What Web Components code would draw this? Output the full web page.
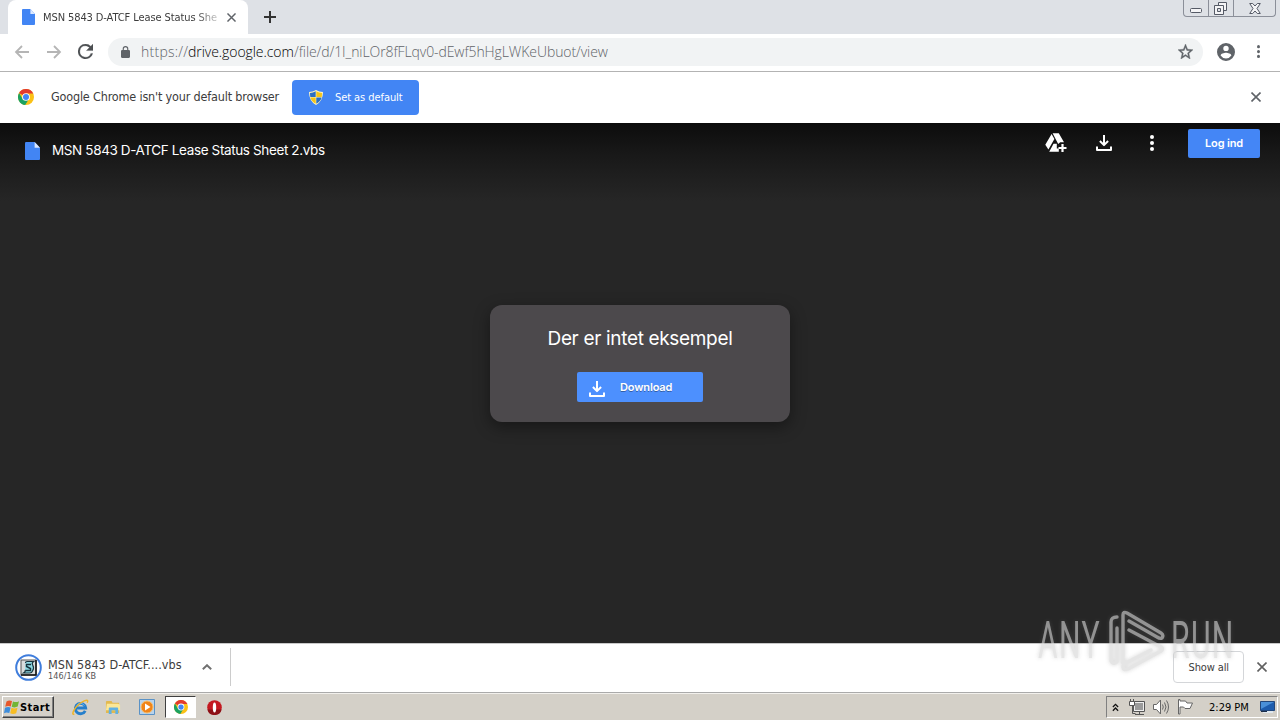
<!DOCTYPE html>
<html lang="en">
<head>
<meta charset="utf-8">
<title>MSN 5843 D-ATCF Lease Status Sheet 2.vbs</title>
<style>
  html, body {
    margin: 0;
    width: 1280px;
    height: 720px;
    overflow: hidden;
  }
  body {
    font-family: "DejaVu Sans Condensed", "DejaVu Sans", sans-serif;
    font-stretch: condensed;
    color: #3c3c3c;
  }
</style>
</head>
<body>
<desk-top></desk-top>

<script>
'use strict'

const ICONS = {
  file: ['0 0 14 16', '<path fill="#4285f4" d="M1 0h8l5 5v10q0 1-1 1H1q-1 0-1-1V1q0-1 1-1z"/><path fill="#dce9ff" d="M9 0l5 5H9z"/>'],
  close: ['0 0 10 10', '<path stroke="currentColor" stroke-width="1.6" d="M.5.5l9 9M9.500.500l-9 9"/>'],
  plus: ['0 0 12 12', '<path stroke="#333" stroke-width="2" d="M6 0v12M0 6h12"/>'],
  back: ['0 0 16 16', '<path fill="none" stroke="#b5b5b5" stroke-width="1.8" d="M15 8H2M8 2L2 8l6 6"/>'],
  forward: ['0 0 16 16', '<path fill="none" stroke="#b5b5b5" stroke-width="1.8" d="M1 8h13M8 2l6 6-6 6"/>'],
  reload: ['4 4 16 16', '<path fill="#4c4f52" stroke="#4c4f52" stroke-width=".3" d="M17.65 6.35A7.96 7.96 0 0 0 12 4a8 8 0 1 0 7.73 10h-2.08A6 6 0 1 1 12 6c1.66 0 3.14.69 4.22 1.78L13 11h7V4z"/>'],
  lock: ['4 1 16 21', '<path fill="#5f6368" d="M18 8h-1V6A5 5 0 0 0 7 6v2H6a2 2 0 0 0-2 2v10c0 1.1.9 2 2 2h12a2 2 0 0 0 2-2V10a2 2 0 0 0-2-2zM9 6a3 3 0 0 1 6 0v2H9z"/>'],
  star: ['2 2 20 19', '<path fill="#5f6368" stroke="#5f6368" stroke-width=".5" d="M22 9.24l-7.19-.62L12 2 9.19 8.63 2 9.24l5.46 4.73L5.82 21 12 17.27 18.18 21l-1.63-7.03zM12 15.4l-3.76 2.27 1-4.28-3.32-2.88 4.38-.38L12 6.1l1.71 4.04 4.38.38-3.32 2.88 1 4.28z"/>'],
  person: ['2 2 20 20', '<path fill="#5f6368" d="M12 2a10 10 0 1 0 0 20 10 10 0 0 0 0-20zm0 3a3 3 0 1 1 0 6 3 3 0 0 1 0-6zm0 14.2a7.2 7.2 0 0 1-6-3.22c.03-1.99 4-3.08 6-3.08s5.97 1.09 6 3.08a7.2 7.2 0 0 1-6 3.22z"/>'],
  dots: ['0 0 4 16', '<g fill="currentColor"><circle cx="2" cy="2" r="2"/><circle cx="2" cy="8" r="2"/><circle cx="2" cy="14" r="2"/></g>'],
  chrome: ['0 0 24 24', '<circle cx="12" cy="12" r="12" fill="#fbc116"/><path fill="#e33b2e" d="M12 12L1.6 6a12 12 0 0 1 20.8 0L23 6.8H12z"/><path fill="#1ba261" d="M1.6 6a12 12 0 0 0 9.2 18l5.5-9L12 12 6.8 14.8z"/><circle cx="12" cy="12" r="5.8" fill="#fff"/><circle cx="12" cy="12" r="4.5" fill="#4285f4"/>'],
  shield: ['0 0 14 15', '<path fill="#fff5c2" d="M7 0q3 2 7 2 0 9-7 13Q0 11 0 2q4 0 7-2z"/><path fill="#2b6fc2" d="M6.7 1.2v5.8H1.3Q1 5 1 3q3 0 5.700-1.800zM7.300 7.500h5.300q-1 4-5.300 6.300z"/><path fill="#f5c518" d="M7.300 1.200Q10 3 13 3q0 2-.3 4H7.300zM1.400 7.500h5.300v6.300Q2.400 11.500 1.400 7.500z"/>'],
  driveAdd: ['0 0 22 20', '<path fill="#fff" d="M6.600 1L9.400 6 3.400 16.500.3 11.800zM7.600.3h6.200l5.200 9h-3.800l-2 1.600zM7.200 13.200l1.300-2.400h3.300v4.800h2v3.100H4.200z"/><path stroke="#fff" stroke-width="2.200" d="M17.500 11v8M13.500 15h8"/>'],
  download: ['0 0 16 16', '<path fill="none" stroke="#fff" stroke-width="2" stroke-linejoin="round" d="M8 0v9.500M3.900 6L8 10.100 12.100 6M1 11.500V15h14v-3.500"/>'],
  chevron: ['0 0 10 6', '<path fill="none" stroke="#707070" stroke-width="1.900" d="M.8 5.300L5 1.200l4.200 4.100"/>'],
  script: ['0 0 27 27', '<circle cx="13.500" cy="13.500" r="12.300" fill="#fff" stroke="#3f7ddc" stroke-width="2"/><path fill="#d8dcdc" stroke="#555" d="M6 6h15v15H6z"/><path fill="none" stroke="#111" stroke-width="1.500" d="M21 6v15H6"/><path fill="#8fdbe4" stroke="#16323c" stroke-width="1.200" d="M10.500 9q0-1.500 1.500-1.500h6.500q-2 1.500-.8 3.500 1.800 3-.2 6-.8 2-2.500 2H8.500q2.500-1.500 1.500-3"/><path fill="none" stroke="#16323c" stroke-width="1.400" d="M16 10.500h-4.500v2l4 2v2h-5"/>'],
  windows: ['0 0 16 16', '<path fill="#e7582b" d="M2.500 2.500Q5 .8 8 2L6.800 7.400Q4 6.300 1.200 7.800z"/><path fill="#73b535" d="M9 2.400q3 1.400 6-.2l-1.300 5.400q-3 1.500-6 .2z"/><path fill="#3e8ddb" d="M1 8.700q3-1.400 5.600-.3L5.300 14q-3-1.200-5.300.2z"/><path fill="#f7bd23" d="M7.500 8.800q3 1.400 6-.1l-1.300 5.500q-3 1.500-6 .1z"/>'],
  explorer: ['0 0 18 18', '<path fill="none" stroke="#267fcb" stroke-width="3" d="M14 12.500A5.500 5.500 0 1 1 14.500 9.500H5"/><path fill="none" stroke="#70b8ee" stroke-width="1" d="M5 7a4.500 4.500 0 0 1 8 0"/><path fill="none" stroke="#eeb52b" stroke-width="1.600" d="M2.500 16Q-.5 17 2 12 6 5 13 2q5-2 3 2"/>'],
  folder: ['0 0 17 17', '<path fill="#e2b94f" d="M1 3q0-1 1-1h5l1 2h7v11H1z"/><path fill="#fbe797" d="M2 5h12l2 1v6H1z"/><path fill="#61b1e3" d="M4 10q0-1 1-1h8q1 0 1 1v6h-3v-4H7v4H4z"/>'],
  player: ['0 0 16 16', '<path fill="#b8d3ec" stroke="#5a92c6" d="M.5.5h15v15H.5z"/><circle cx="8" cy="8" r="6" fill="#f08418" stroke="#f9bd67"/><path fill="#fff" d="M6 4.500L11.500 8 6 11.500z"/>'],
  opera: ['0 0 16 16', '<circle cx="8" cy="8" r="7.800" fill="#c41920"/><path fill="#8d1016" d="M.4 10a7.800 7.800 0 0 0 15.200 0z"/><ellipse cx="8" cy="8" rx="1.800" ry="5.300" fill="#fff"/>'],
  tray: ['0 0 8 10', '<path fill="none" stroke="#111" stroke-width="1.500" d="M1 4.500l3-3 3 3M1 8.500l3-3 3 3"/>'],
  network: ['0 0 16 16', '<path fill="#eee" stroke="#555" d="M4.500 2.500h11v10h-11z"/><path fill="#9b9b9b" d="M6 4h8v7H6z"/><path stroke="#555" d="M10.500 13v2M6 15.500h9"/><path fill="none" stroke="#555" d="M3.500 6v8.500h3"/><path fill="#fff" stroke="#555" d="M.5 2.500h5v4h-5z"/><path stroke="#555" d="M1.500 0v3M4.500 0v3"/>'],
  sound: ['0 0 16 16', '<path fill="#fff" stroke="#666" d="M.5 5.500h3l4-4.500v14l-4-4.500h-3z"/><path fill="none" stroke="#666" d="M9.500 5.500q1.500 2.500 0 5M11.500 3.500q3 4.500 0 9M13.500 1.500q4 6.500 0 13"/>'],
  flag: ['0 0 16 16', '<path fill="#fff" stroke="#666" d="M1.500 15V.5H3V2h5.500l1.500 2h5.500L13 9.500H8L6.500 8H3v7z"/>'],
  screen: ['0 0 15 13', '<path fill="#1d5cad" stroke="#23477a" d="M.5.500h14v9H.5z"/><path fill="#4a90d8" d="M1 1h13L1 8z"/><path fill="#dfe7ee" d="M3 10h10v2H3z"/><path fill="#1b2d48" d="M1 10h6v1H1z"/>'],
  minimize: ['0 0 13 5', '<rect x=".5" y=".5" width="11" height="4" rx="1" fill="#f4f4f6" stroke="#555a66"/>'],
  restore: ['0 0 13 13', '<path fill="#f4f4f6" stroke="#555a66" d="M4.500.5h8v8h-8z"/><path fill="#f4f4f6" stroke="#555a66" d="M.5 3.500h9v9h-9z"/><path fill="#dee1e6" stroke="#555a66" d="M3.500 6.500h3v3h-3z"/>'],
  winClose: ['0 0 12 11', '<path fill="#f4f4f6" stroke="#555a66" d="M.7.500h3L6 3 8.300.500h3L8 5.500l3.300 5h-3L6 8l-2.300 2.500h-3L4 5.500z"/>'],
  play: ['0 0 56 62', '<g fill="none" stroke="currentColor" stroke-width="3.400" stroke-linejoin="round" stroke-linecap="round"><path d="M8 7Q2 7 2 12v38q0 4 4 3M14 53V5q0-4 4-2l34 20q3 2 1 5-2 1-5-1L20 11M8 18v34M20 20l32 17q3 2 0 4L19 59q-5 2-5-2 0-2 3-4l25-13"/></g>']
}

class UiIcon extends HTMLElement {
  connectedCallback() {
    const [box, shapes] = ICONS[this.getAttribute('name')]
    const w = this.getAttribute('w')
    const h = this.getAttribute('h') || w
    this.attachShadow({ mode: 'open' }).innerHTML = `
    <style>
    :host { display: block; flex: none; width: ${w}px; height: ${h}px; }
    svg { display: block; width: 100%; height: 100%; }
    </style>
    <svg viewBox="${box}" preserveAspectRatio="none">${shapes}</svg>
    `
  }
}

// one line of text, tracked so that it fills the given width
class TextLabel extends HTMLElement {
  connectedCallback() {
    this.attachShadow({ mode: 'open' }).innerHTML = `
    <style>
    :host { display: inline-block; flex: none; white-space: nowrap; }
    span { display: inline-block; }
    </style>
    <span><slot></slot></span>
    `
    const width = Number(this.getAttribute('w'))
    if (!width) return
    const span = this.shadowRoot.querySelector('span')
    const count = this.textContent.length
    span.style.letterSpacing = `${(width - span.offsetWidth) / count}px`
    this.style.width = `${width}px`
  }
}

class TabStrip extends HTMLElement {
  connectedCallback() {
    this.attachShadow({ mode: 'open' }).innerHTML = `
    <style>
    :host { display: flex; height: 34px; background: #dee1e6; }
    .tab {
      display: flex;
      align-items: center;
      box-sizing: border-box;
      width: 240px;
      margin-left: 8px;
      padding: 0 11px 0 14px;
      background: #fff;
      border-radius: 8px 8px 0 0;
    }
    .title {
      width: 176px;
      margin: 0 8px;
      font-size: 11px;
      -webkit-mask-image: linear-gradient(to right, #000 152px, rgba(0, 0, 0, .2) 176px);
    }
    .tab ui-icon[name=close] { color: #5f6368; }
    .add { margin: 11px 0 0 16px; }
    .buttons {
      display: flex;
      box-sizing: border-box;
      height: 17px;
      margin: 0 4px 0 auto;
      border: 1px solid #8b8f99;
      border-top: 0;
      border-radius: 0 0 4px 4px;
    }
    .buttons div { display: flex; align-items: center; justify-content: center; width: 24px; border-right: 1px solid #8b8f99; }
    .buttons div:first-child { align-items: flex-end; padding-bottom: 3px; box-sizing: border-box; width: 25px; }
    .buttons div:last-child { width: 41px; border: 0; }
    .buttons ui-icon[name=restore] { margin: 0 2px 0 0; }
    </style>
    <div class="tab">
      <ui-icon name="file" w="13" h="16"></ui-icon>
      <div class="title"><text-label w="174">MSN 5843 D-ATCF Lease Status She</text-label></div>
      <ui-icon name="close" w="9"></ui-icon>
    </div>
    <ui-icon class="add" name="plus" w="12"></ui-icon>
    <div class="buttons">
      <div><ui-icon name="minimize" w="13" h="5"></ui-icon></div>
      <div><ui-icon name="restore" w="13"></ui-icon></div>
      <div><ui-icon name="winClose" w="12" h="11"></ui-icon></div>
    </div>
    `
  }
}

class AddressBar extends HTMLElement {
  connectedCallback() {
    this.attachShadow({ mode: 'open' }).innerHTML = `
    <style>
    :host {
      display: flex;
      align-items: center;
      box-sizing: border-box;
      height: 38px;
      padding: 0 20px 2px 14px;
      background: #fff;
      border-bottom: 1px solid #b3b3b3;
    }
    ui-icon[name=forward], ui-icon[name=reload] { margin-left: 16px; }
    .url {
      display: flex;
      align-items: center;
      box-sizing: border-box;
      width: 1095px;
      height: 28px;
      margin: 0 14px 0 15px;
      padding: 0 10px 0 13px;
      border-radius: 14px;
      background: #f1f3f4;
      font: 300 14px "Open Sans", sans-serif;
      color: #5f6368;
    }
    ui-icon[name=lock] { margin-right: 11px; }
    .host { color: #000; }
    ui-icon[name=star] { margin-left: auto; }
    ui-icon[name=dots] { margin-left: auto; color: #5f6368; }
    </style>
    <ui-icon name="back" w="16"></ui-icon>
    <ui-icon name="forward" w="16"></ui-icon>
    <ui-icon name="reload" w="15"></ui-icon>
    <div class="url">
      <ui-icon name="lock" w="9" h="12"></ui-icon>
      <text-label w="47">https://</text-label><text-label class="host" w="106">drive.google.com</text-label><text-label w="314">/file/d/1I_niLOr8fFLqv0-dEwf5hHgLWKeUbuot/view</text-label>
      <ui-icon name="star" w="15"></ui-icon>
    </div>
    <ui-icon name="person" w="18"></ui-icon>
    <ui-icon name="dots" w="3" h="13"></ui-icon>
    `
  }
}

class InfoBar extends HTMLElement {
  connectedCallback() {
    this.attachShadow({ mode: 'open' }).innerHTML = `
    <style>
    :host {
      display: flex;
      align-items: center;
      box-sizing: border-box;
      height: 51px;
      padding: 0 19px 1px 18px;
      background: #fff;
      font-size: 12.500px;
    }
    .message { margin: 0 13px 2px 17px; }
    .set {
      display: flex;
      align-items: center;
      box-sizing: border-box;
      width: 127px;
      height: 35px;
      padding-left: 17px;
      border-radius: 4px;
      background: #4285f4;
      color: #fff;
      font-size: 11px;
    }
    .set text-label { margin-left: 12px; }
    ui-icon[name=close] { margin-left: auto; color: #5f6368; }
    </style>
    <ui-icon name="chrome" w="16"></ui-icon>
    <text-label class="message" w="228">Google Chrome isn't your default browser</text-label>
    <div class="set">
      <ui-icon name="shield" w="14" h="15"></ui-icon>
      <text-label w="68">Set as default</text-label>
    </div>
    <ui-icon name="close" w="10"></ui-icon>
    `
  }
}

class DriveViewer extends HTMLElement {
  connectedCallback() {
    this.attachShadow({ mode: 'open' }).innerHTML = `
    <style>
    :host {
      display: flex;
      flex-direction: column;
      height: 520px;
      background: linear-gradient(#0c0c0c 0, #181818 30px, #262626 78px);
      font-family: Inter, "Open Sans", sans-serif;
      color: #fff;
    }
    header { display: flex; align-items: flex-start; height: 182px; padding: 0 20px 0 25px; box-sizing: border-box; }
    .name { margin: 18px 0 0 12px; font-size: 13.500px; line-height: 18px; }
    header ui-icon[name=file] { margin-top: 19px; }
    header ui-icon[name=driveAdd] { margin: 10px 0 0 auto; }
    header ui-icon[name=download] { margin: 12px 0 0 29px; }
    header ui-icon[name=dots] { margin: 12px 0 0 38px; }
    .login {
      width: 72px;
      height: 29px;
      margin: 6px 0 0 34px;
      border-radius: 2px;
      background: #4486f6;
      font-size: 11px;
      font-weight: 600;
      line-height: 29px;
      text-align: center;
    }
    .card {
      display: flex;
      flex-direction: column;
      align-items: center;
      box-sizing: border-box;
      width: 300px;
      height: 117px;
      align-self: center;
      padding-top: 21px;
      border-radius: 12px;
      background: #4c494c;
      box-shadow: 0 5px 16px rgba(0, 0, 0, .4);
    }
    .card > text-label { font-size: 19px; line-height: 26px; }
    .get {
      display: flex;
      align-items: center;
      box-sizing: border-box;
      width: 126px;
      height: 30px;
      margin-top: 20px;
      padding-left: 12px;
      border-radius: 2px;
      background: #4d90fe;
      font-size: 11px;
      font-weight: 600;
      text-shadow: 0 1px rgba(0, 0, 0, .35);
    }
    .get ui-icon { margin-top: 4px; }
    .get text-label { margin-left: 15px; }
    </style>
    <header>
      <ui-icon name="file" w="15" h="18"></ui-icon>
      <text-label class="name" w="273">MSN 5843 D-ATCF Lease Status Sheet 2.vbs</text-label>
      <ui-icon name="driveAdd" w="22" h="20"></ui-icon>
      <ui-icon name="download" w="16"></ui-icon>
      <ui-icon name="dots" w="4" h="16"></ui-icon>
      <div class="login"><text-label w="38">Log ind</text-label></div>
    </header>
    <div class="card">
      <text-label w="185">Der er intet eksempel</text-label>
      <div class="get">
        <ui-icon name="download" w="16"></ui-icon>
        <text-label w="52">Download</text-label>
      </div>
    </div>
    `
  }
}

class DownloadShelf extends HTMLElement {
  connectedCallback() {
    this.attachShadow({ mode: 'open' }).innerHTML = `
    <style>
    :host {
      display: flex;
      align-items: center;
      box-sizing: border-box;
      height: 49px;
      padding: 0 13px 2px 15px;
      border-top: 1px solid #c8c8c8;
      background: #fff;
    }
    .item {
      display: flex;
      align-items: center;
      box-sizing: border-box;
      width: 216px;
      height: 38px;
      border-right: 1px solid #ccc;
    }
    .names { display: flex; flex-direction: column; margin: 4px 20px 0 6px; }
    .names text-label:first-child { font-size: 12.500px; line-height: 14px; }
    .names text-label:last-child { font-size: 9px; line-height: 9px; color: #555; }
    .all {
      box-sizing: border-box;
      width: 71px;
      height: 32px;
      margin: 0 13px 0 auto;
      border: 1px solid #d4d6d9;
      border-radius: 4px;
      font-size: 11px;
      line-height: 31px;
      text-align: center;
    }
    ui-icon[name=close] { color: #606060; }
    </style>
    <div class="item">
      <ui-icon name="script" w="27"></ui-icon>
      <div class="names">
        <text-label w="134">MSN 5843 D-ATCF....vbs</text-label>
        <text-label w="48">146/146 KB</text-label>
      </div>
      <ui-icon name="chevron" w="10" h="6"></ui-icon>
    </div>
    <div class="all"><text-label w="40">Show all</text-label></div>
    <ui-icon name="close" w="10"></ui-icon>
    `
  }
}

class TaskBar extends HTMLElement {
  connectedCallback() {
    this.attachShadow({ mode: 'open' }).innerHTML = `
    <style>
    :host {
      display: flex;
      align-items: center;
      box-sizing: border-box;
      height: 28px;
      padding: 1px 2px 0;
      border-top: 1px solid #aaa;
      background: #d4d0c8;
      box-shadow: inset 0 1px #f2f0ec;
      color: #000;
      font-size: 11px;
    }
    .start {
      display: flex;
      align-items: center;
      box-sizing: border-box;
      width: 52px;
      height: 22px;
      padding-left: 1px;
      border: 1px solid;
      border-color: #fff #404040 #404040 #fff;
      box-shadow: inset -1px -1px #808080;
      font-weight: bold;
    }
    .apps { display: flex; align-items: center; margin-left: 18px; }
    ui-icon[name=folder] { margin: 0 18px 0 16px; }
    .running {
      display: flex;
      align-items: center;
      justify-content: center;
      box-sizing: border-box;
      width: 31px;
      height: 22px;
      margin: 0 11px 0 10px;
      border: 1px solid;
      border-color: #404040 #fff #fff #404040;
      background: #fff;
    }
    .tray {
      display: flex;
      align-items: center;
      box-sizing: border-box;
      width: 172px;
      height: 22px;
      margin-left: auto;
      padding: 0 2px 0 5px;
      border: 1px solid;
      border-color: #808080 #fff #fff #808080;
    }
    ui-icon[name=network] { margin-left: 10px; }
    ui-icon[name=sound], ui-icon[name=flag] { margin-left: 8px; }
    .tray text-label { margin: 0 11px 0 auto; }
    </style>
    <div class="start"><ui-icon name="windows" w="16"></ui-icon><text-label w="30">Start</text-label></div>
    <div class="apps">
      <ui-icon name="explorer" w="17"></ui-icon>
      <ui-icon name="folder" w="16"></ui-icon>
      <ui-icon name="player" w="16"></ui-icon>
      <div class="running"><ui-icon name="chrome" w="14"></ui-icon></div>
      <ui-icon name="opera" w="15"></ui-icon>
    </div>
    <div class="tray">
      <ui-icon name="tray" w="7" h="9"></ui-icon>
      <ui-icon name="network" w="16"></ui-icon>
      <ui-icon name="sound" w="16"></ui-icon>
      <ui-icon name="flag" w="16"></ui-icon>
      <text-label w="40">2:29 PM</text-label>
      <ui-icon name="screen" w="15" h="13"></ui-icon>
    </div>
    `
  }
}

class WaterMark extends HTMLElement {
  connectedCallback() {
    this.attachShadow({ mode: 'open' }).innerHTML = `
    <style>
    :host {
      position: absolute;
      left: 1038px;
      top: 610px;
      display: flex;
      align-items: center;
      height: 62px;
      color: #d6d6d6;
      opacity: .62;
      filter: drop-shadow(0 0 2px rgba(120, 120, 120, .5));
      font: 52px/62px "Roboto", sans-serif;
      pointer-events: none;
    }
    div { width: 63px; transform: scaleX(.58); transform-origin: 0 50%; }
    ui-icon { margin: 0 6px 0 8px; }
    </style>
    <div><text-label w="109">ANY</text-label></div>
    <ui-icon name="play" w="56" h="62"></ui-icon>
    <div><text-label w="110">RUN</text-label></div>
    `
  }
}

class DeskTop extends HTMLElement {
  connectedCallback() {
    this.attachShadow({ mode: 'open' }).innerHTML = `
    <style>
    :host { display: flex; flex-direction: column; position: relative; width: 1280px; height: 720px; overflow: hidden; }
    </style>
    <tab-strip></tab-strip>
    <address-bar></address-bar>
    <info-bar></info-bar>
    <drive-viewer></drive-viewer>
    <download-shelf></download-shelf>
    <task-bar></task-bar>
    <water-mark></water-mark>
    `
  }
}

customElements.define('ui-icon', UiIcon)
customElements.define('tab-strip', TabStrip)
customElements.define('address-bar', AddressBar)
customElements.define('info-bar', InfoBar)
customElements.define('drive-viewer', DriveViewer)
customElements.define('download-shelf', DownloadShelf)
customElements.define('task-bar', TaskBar)
customElements.define('water-mark', WaterMark)
customElements.define('desk-top', DeskTop)
// labels measure themselves, so they are upgraded once the bars are laid out
customElements.define('text-label', TextLabel)
</script>
</body>
</html>
